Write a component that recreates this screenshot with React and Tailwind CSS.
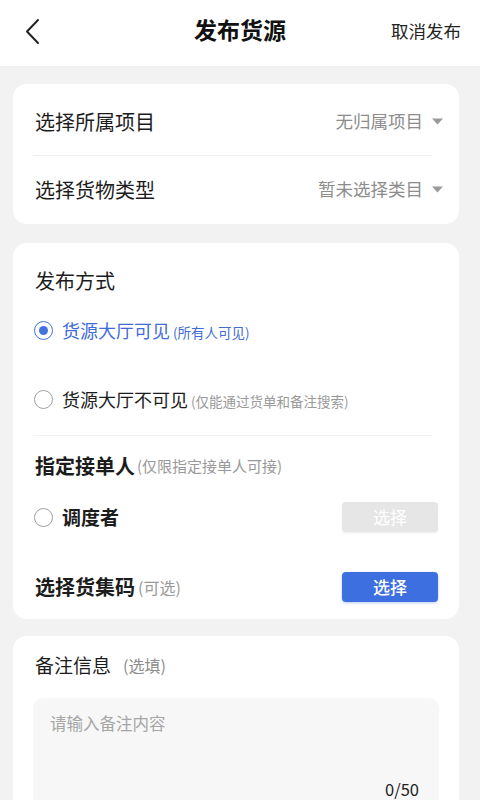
import React from "react";

const font = { fontFamily: '"Noto Sans CJK SC", "Noto Sans", sans-serif' };

function Caret() {
  return (
    <svg width="11" height="7" viewBox="0 0 11 7" className="shrink-0">
      <path d="M0 0.5 L11 0.5 L5.5 6.5 Z" fill="#9a9a9a" />
    </svg>
  );
}

function Radio({ checked }) {
  if (checked) {
    return (
      <span className="w-[19px] h-[19px] rounded-full border-[1.5px] border-[#4472dc] flex items-center justify-center shrink-0">
        <span className="w-[9px] h-[9px] rounded-full bg-[#4472dc]" />
      </span>
    );
  }
  return <span className="w-[19px] h-[19px] rounded-full border-[1.5px] border-[#a0a0a0] shrink-0" />;
}

export default function App() {
  return (
    <div className="w-[480px] h-[800px] overflow-hidden bg-[#f2f2f2]" style={font}>
      {/* Header */}
      <header className="h-[66px] bg-white flex items-center justify-between px-[19px] pb-[4px] relative">
        <svg width="24" height="28" viewBox="0 0 24 28" className="ml-[4px] mt-[2px]">
          <path d="M15 2 L4 13.5 L15 25" fill="none" stroke="#222" strokeWidth="2" strokeLinecap="round" strokeLinejoin="round" />
        </svg>
        <h1 className="absolute left-1/2 top-[13px] -translate-x-1/2 text-[23px] leading-[32px] font-bold text-[#111]">发布货源</h1>
        <span className="text-[17.5px] text-[#222]">取消发布</span>
      </header>

      <div className="pl-[13px] pr-[21px]">
        {/* Card 1 */}
        <section className="mt-[18px] bg-white rounded-[14px] pt-[4px] pb-[1px]">
          <div className="h-[67px] flex items-center justify-between pl-[22px] pr-[16px]">
            <span className="text-[20px] text-[#1c1c1c]">选择所属项目</span>
            <span className="flex items-center gap-[9px] text-[17.5px] text-[#8c8c8c]">
              无归属项目
              <Caret />
            </span>
          </div>
          <div className="ml-[20px] mr-[27px] h-px bg-[#f0f0f0]" />
          <div className="h-[67px] flex items-center justify-between pl-[22px] pr-[16px]">
            <span className="text-[20px] text-[#1c1c1c]">选择货物类型</span>
            <span className="flex items-center gap-[9px] text-[17.5px] text-[#8c8c8c]">
              暂未选择类目
              <Caret />
            </span>
          </div>
        </section>

        {/* Card 2 */}
        <section className="mt-[19px] bg-white rounded-[14px] pt-[22px] pb-[11px]">
          <div className="h-[32px] flex items-center px-[22px]">
            <span className="text-[20px] text-[#1c1c1c]">发布方式</span>
          </div>
          <div className="h-[66px] flex items-center gap-[9px] pl-[21px]">
            <Radio checked />
            <span className="text-[18px] text-[#3f6cd6]">
              货源大厅可见
              <span className="text-[13.5px] ml-[3px]">(所有人可见)</span>
            </span>
          </div>
          <div className="h-[72px] flex items-center gap-[9px] pl-[21px]">
            <Radio />
            <span className="text-[18px] text-[#1c1c1c]">
              货源大厅不可见
              <span className="text-[13.5px] text-[#999] ml-[3px]">(仅能通过货单和备注搜索)</span>
            </span>
          </div>
          <div className="ml-[20px] mr-[27px] h-px bg-[#f2f2f2]" />
          <div className="h-[60px] flex items-center px-[22px]">
            <span className="text-[20px] font-bold text-[#1c1c1c]">指定接单人</span>
            <span className="text-[15px] text-[#999] ml-[2px]">(仅限指定接单人可接)</span>
          </div>
          <div className="h-[42px] flex items-center justify-between pl-[21px] pr-[21px]">
            <span className="flex items-center gap-[9px]">
              <Radio />
              <span className="text-[19px] font-bold text-[#1c1c1c]">调度者</span>
            </span>
            <button className="w-[96px] h-[30px] rounded-[4px] bg-[#e6e6e6] text-white text-[17px] shadow-[0_1px_2px_rgba(0,0,0,0.08)]">
              选择
            </button>
          </div>
          <div className="mt-[28px] h-[42px] flex items-center justify-between pl-[22px] pr-[21px]">
            <span className="flex items-center">
              <span className="text-[20px] font-bold text-[#1c1c1c]">选择货集码</span>
              <span className="text-[16px] text-[#999] ml-[3px]">(可选)</span>
            </span>
            <button className="w-[96px] h-[30px] rounded-[4px] bg-[#3d6fe0] text-white text-[17px] font-medium shadow-[0_1px_3px_rgba(61,111,224,0.35)]">
              选择
            </button>
          </div>
        </section>

        {/* Card 3 */}
        <section className="mt-[17px] bg-white rounded-[14px] pt-[14px] px-[20px] pb-[20px]">
          <div className="h-[30px] flex items-center pl-[2px]">
            <span className="text-[19px] text-[#1c1c1c]">备注信息</span>
            <span className="text-[16px] text-[#8c8c8c] ml-[12px]">(选填)</span>
          </div>
          <div className="mt-[18px] h-[120px] rounded-[10px] bg-[#f7f7f7] flex flex-col justify-between pt-[13px] pl-[17px] pr-[20px] pb-[17px]">
            <span className="text-[16.5px] text-[#a6a6a6]">请输入备注内容</span>
            <span className="self-end text-[16.5px] text-[#222] leading-[24px]">0/50</span>
          </div>
        </section>
      </div>
    </div>
  );
}
